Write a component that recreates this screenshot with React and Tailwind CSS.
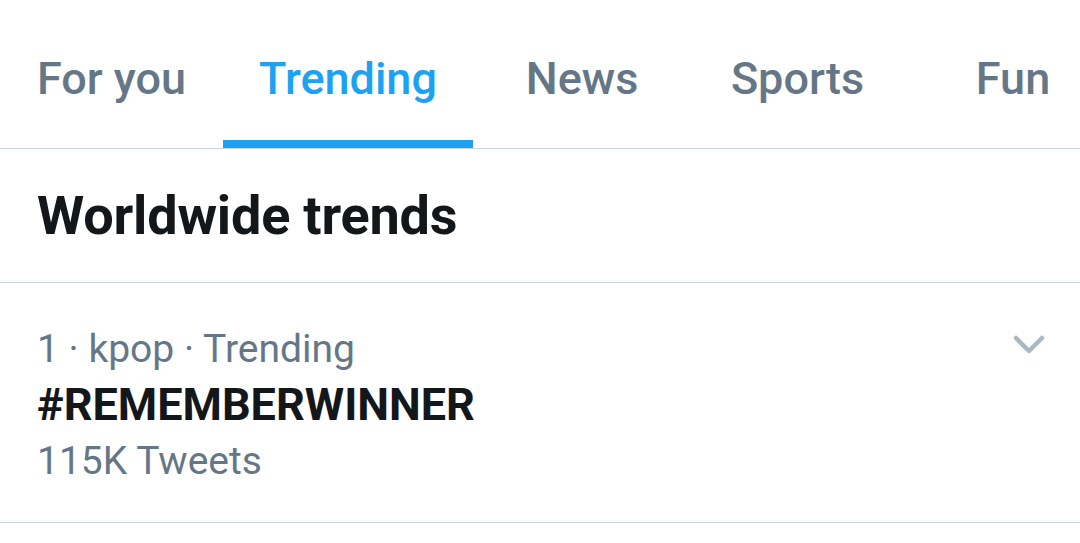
import React from "react";

const tabs = [
  { label: "For you", w: "w-[223px]" },
  { label: "Trending", w: "w-[250px]", active: true },
  { label: "News", w: "w-[218px]" },
  { label: "Sports", w: "w-[213px]" },
  { label: "Fun", w: "w-[218px]" },
];

export default function App() {
  return (
    <div
      className="w-[1080px] h-[543px] bg-white overflow-hidden"
      style={{ fontFamily: "Roboto, 'Liberation Sans', sans-serif" }}
    >
      {/* tabs */}
      <div className="flex h-[149px] border-b border-[#ccd6dd] overflow-hidden">
        {tabs.map((t) => (
          <div key={t.label} className={`${t.w} shrink-0 flex flex-col`}>
            <div
              className={`flex-1 flex items-center justify-center pt-[18px] text-[45px] font-medium ${
                t.active ? "text-[#1da1f2]" : "text-[#657786]"
              }`}
            >
              {t.label}
            </div>
            <div className={`h-[8px] ${t.active ? "bg-[#1da1f2]" : ""}`} />
          </div>
        ))}
      </div>

      {/* header */}
      <div className="h-[134px] flex items-center px-[37px] border-b border-[#ccd6dd]">
        <h1 className="text-[54px] font-bold text-[#14171a] tracking-[-0.2px]">
          Worldwide trends
        </h1>
      </div>

      {/* trend row */}
      <div className="flex justify-between pl-[37px] pr-[35px] pt-[38px] pb-[33px] border-b border-[#ccd6dd]">
        <div className="flex flex-col">
          <p className="text-[39px] leading-[56px] text-[#657786]">1 · kpop · Trending</p>
          <p className="text-[45px] leading-[56px] font-bold text-[#14171a]">#REMEMBERWINNER</p>
          <p className="text-[39px] leading-[56px] text-[#657786]">115K Tweets</p>
        </div>
        <div className="pt-[14px]">
          <svg width="32" height="20" viewBox="0 0 32 20" fill="none">
            <polyline
              points="3,3 16,16 29,3"
              stroke="#aab8c2"
              strokeWidth="4.5"
              strokeLinecap="round"
              strokeLinejoin="round"
            />
          </svg>
        </div>
      </div>
    </div>
  );
}
